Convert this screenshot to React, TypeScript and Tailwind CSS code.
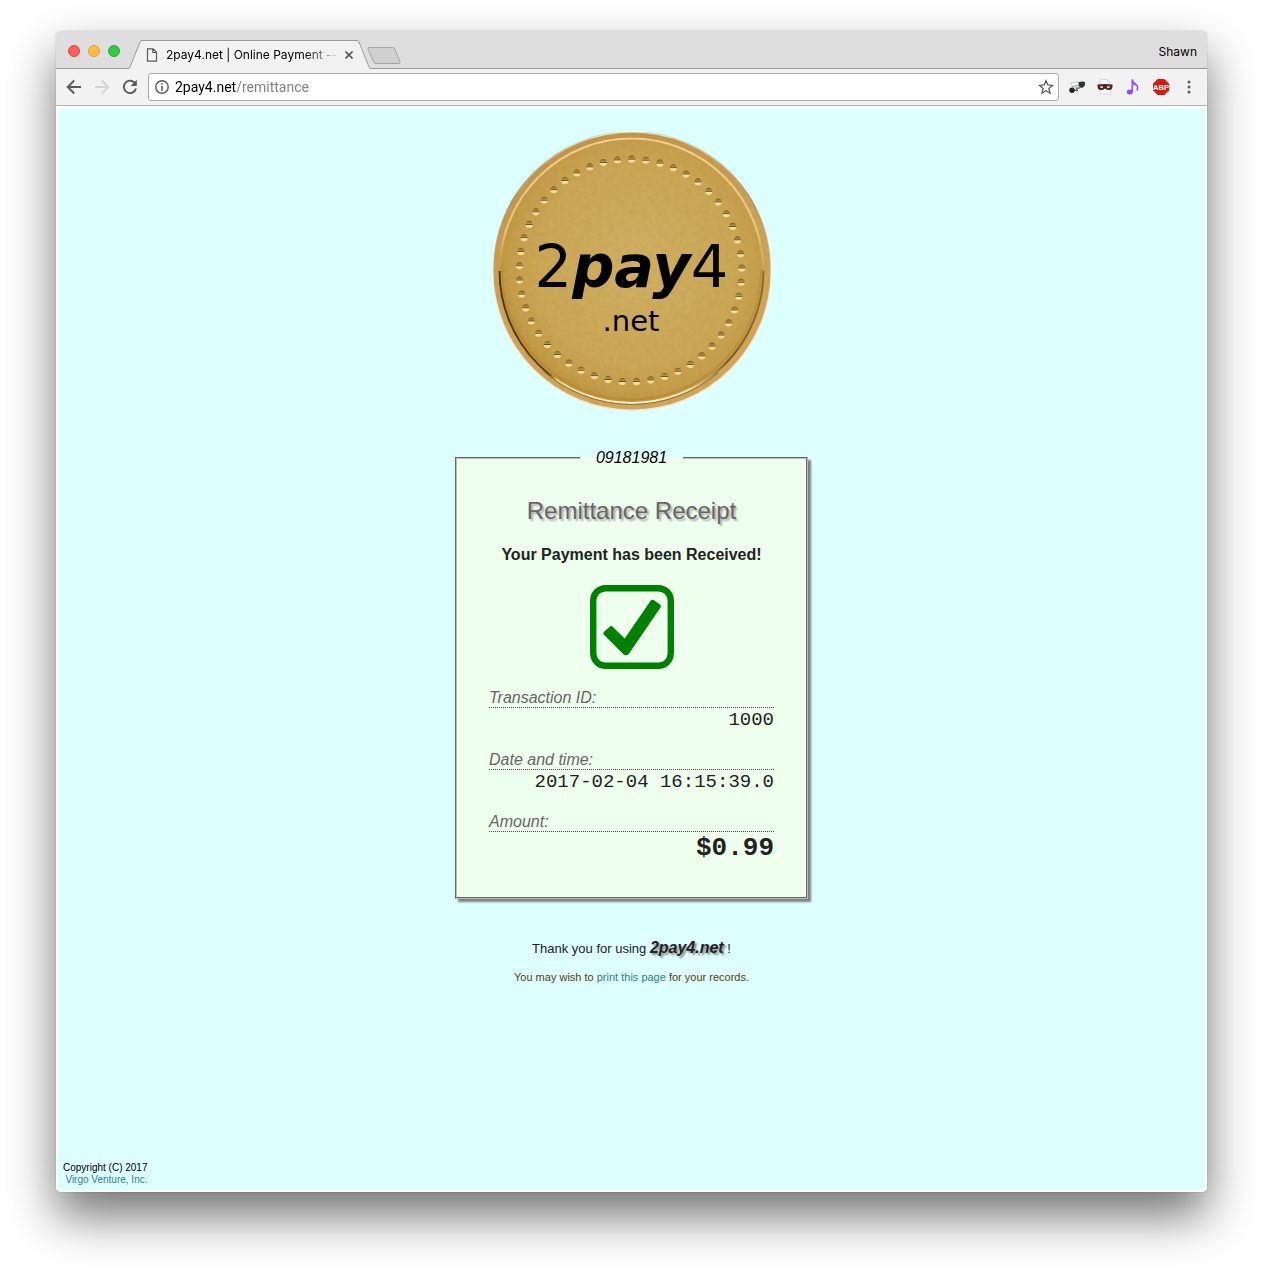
import React from "react";

const DOT_COUNT = 49;
const dots = Array.from({ length: DOT_COUNT }, (_, i) => {
  const angle = (i / DOT_COUNT) * Math.PI * 2 + 0.01;
  return { x: 138.5 + 111.3 * Math.sin(angle), y: 138.5 - 111.3 * Math.cos(angle) };
});

function CoinLogo() {
  return (
    <svg viewBox="0 0 280 280" className="block size-[280px]" role="img" aria-label="2pay4.net">
      <defs>
        <radialGradient id="face" cx="0.52" cy="0.48" r="0.55">
          <stop offset="0" stopColor="#d0af64" />
          <stop offset="0.65" stopColor="#cba858" />
          <stop offset="0.88" stopColor="#c59d4b" />
          <stop offset="1" stopColor="#ba8d36" />
        </radialGradient>
        <linearGradient id="rim" x1="0" y1="0" x2="0.3" y2="1">
          <stop offset="0" stopColor="#c0934a" />
          <stop offset="0.25" stopColor="#c4994e" />
          <stop offset="0.6" stopColor="#cba45c" />
          <stop offset="1" stopColor="#cfa65f" />
        </linearGradient>
        <linearGradient id="lowerEdge" x1="0" y1="0" x2="1" y2="0">
          <stop offset="0" stopColor="#4a3206" />
          <stop offset="0.19" stopColor="#5b3f0b" />
          <stop offset="0.22" stopColor="#f6dfa0" />
          <stop offset="0.5" stopColor="#fffbe6" />
          <stop offset="0.72" stopColor="#f9e6ad" />
          <stop offset="0.86" stopColor="#7b5815" />
          <stop offset="1" stopColor="#8d6824" />
        </linearGradient>
        <linearGradient id="upperEdge" x1="0" y1="0" x2="0" y2="1">
          <stop offset="0" stopColor="#f7d697" stopOpacity="0.95" />
          <stop offset="0.7" stopColor="#f4cd85" stopOpacity="0.8" />
          <stop offset="1" stopColor="#f4cd85" stopOpacity="0" />
        </linearGradient>
        <linearGradient id="outline" x1="0" y1="0" x2="0" y2="1">
          <stop offset="0" stopColor="#8f7440" stopOpacity="0.2" />
          <stop offset="0.5" stopColor="#8f7440" stopOpacity="0.8" />
          <stop offset="1" stopColor="#8f7440" stopOpacity="0" />
        </linearGradient>
        <linearGradient id="dot" x1="0" y1="0" x2="0" y2="1">
          <stop offset="0" stopColor="#7a591c" />
          <stop offset="0.2" stopColor="#9a7835" />
          <stop offset="0.38" stopColor="#b5944c" />
          <stop offset="0.5" stopColor="#6a4b14" />
          <stop offset="0.62" stopColor="#fbe3a6" />
          <stop offset="1" stopColor="#f0d08a" />
        </linearGradient>
        <filter id="grain" x="0" y="0" width="1" height="1">
          <feTurbulence type="fractalNoise" baseFrequency="0.18" numOctaves="3" seed="4" result="n" />
          <feColorMatrix in="n" type="matrix" values="0 0 0 0 0.38  0 0 0 0 0.24  0 0 0 0 0.03  0.9 0 0 0 -0.34" result="g" />
          <feComposite in="g" in2="SourceGraphic" operator="in" />
        </filter>
      </defs>
      <circle cx="140" cy="139.500" r="139.500" fill="#f6e6cd" />
      <circle cx="140" cy="139" r="138.500" fill="url(#rim)" />
      <path d="M1.500 138A138.500 138.500 0 0 1 278.500 138" fill="none" stroke="url(#outline)" strokeWidth="1.200" />
      <circle cx="139.500" cy="138.500" r="132" fill="url(#face)" />
      <path d="M8 138A131.500 131.500 0 0 1 271 138" fill="none" stroke="url(#upperEdge)" strokeWidth="2.200" />
      <path d="M10 138A129.500 129.500 0 0 0 269 138" fill="none" stroke="#a27627" strokeWidth="2" opacity="0.3" />
      <path d="M7.500 139A132 132 0 0 0 271.500 139" fill="none" stroke="url(#lowerEdge)" strokeWidth="1.900" />
      <path d="M50 238A134 134 0 0 0 226 241" fill="none" stroke="#7c5715" strokeWidth="1" opacity="0.7" />
      <circle cx="140" cy="139" r="138" fill="#000" filter="url(#grain)" opacity="0.35" />
      {dots.map((d, i) => (
        <circle key={i} cx={d.x} cy={d.y} r="3.600" fill="url(#dot)" />
      ))}
      <g fontFamily="DejaVu Sans, sans-serif" fill="#000" textAnchor="middle">
        <text x="139.500" y="155" fontSize="59">
          2<tspan fontWeight="bold" fontStyle="italic">pay</tspan>4
        </text>
        <text x="139" y="199" fontSize="29">.net</text>
      </g>
    </svg>
  );
}

function CheckMark() {
  return (
    <svg viewBox="0 0 84 84" className="mt-[18px] block size-[84px]" role="img" aria-label="Received">
      <rect x="3.200" y="3.200" width="77.600" height="77.600" rx="12.500" fill="none" stroke="#008000" strokeWidth="6.400" />
      <path
        d="M14.300 46.500L20.300 41.200Q21.300 40.400 22.300 41.400L34.700 53.600L60.800 15.600Q62 14.200 63.600 15.100L70 19.600Q71.500 20.800 70.500 22.400L38.700 69Q36 71.400 33.200 69L14.200 50Q12.400 48.300 14.300 46.500Z"
        fill="#008000"
      />
    </svg>
  );
}

const toolButton = "flex size-5 shrink-0 items-center justify-center";

function TabStrip() {
  return (
    <div className="flex h-[38px] items-end border-b border-[#9b9b9b] bg-[#dedede] pl-3">
      <div className="flex gap-2 self-center pt-0.5">
        <button aria-label="Close window" className="size-3 rounded-full border border-[#e2463f] bg-[#fc605b]" />
        <button aria-label="Minimize window" className="size-3 rounded-full border border-[#dfa133] bg-[#fdbc40]" />
        <button aria-label="Zoom window" className="size-3 rounded-full border border-[#27aa35] bg-[#34c84a]" />
      </div>
      <div className="-mb-px ml-2 flex h-[29px]">
        <svg viewBox="0 0 14 29" className="h-[29px] w-3.5">
          <path d="M0 29L0 28.500Q1.500 28.500 2 27L12 2Q12.500.5 14 .5V29Z" fill="#f2f2f2" />
          <path d="M0 28.500Q1.500 28.500 2 27L12 2Q12.500.5 14 .5" fill="none" stroke="#9b9b9b" />
        </svg>
        <div className="flex w-[215px] items-center border-t border-[#9b9b9b] bg-[#f2f2f2] pl-1">
          <svg viewBox="0 0 12 14" className="h-3.5 w-3 shrink-0" fill="none" stroke="#5a5a5a" strokeWidth="1.200">
            <path d="M1.500.8H7L10.500 4.300V13.200H1.500ZM6.800.8V4.500H10.500" />
          </svg>
          <span className="ml-2 w-[173px] overflow-hidden bg-gradient-to-r from-black from-80% to-transparent bg-clip-text font-[Inter,sans-serif] text-xs whitespace-nowrap text-transparent">
            2pay4.net | Online Payment --
          </span>
          <button aria-label="Close tab" className="ml-1 flex size-3 items-center justify-center">
            <svg viewBox="0 0 8 8" className="size-2" stroke="#555" strokeWidth="1.600">
              <path d="M.5.5L7.500 7.500M7.500.5L.5 7.500" />
            </svg>
          </button>
        </div>
        <svg viewBox="0 0 14 29" className="h-[29px] w-3.5">
          <path d="M14 29L14 28.500Q12.500 28.500 12 27L2 2Q1.500.5 0 .5V29Z" fill="#f2f2f2" />
          <path d="M14 28.500Q12.500 28.500 12 27L2 2Q1.500.5 0 .5" fill="none" stroke="#9b9b9b" />
        </svg>
      </div>
      <button aria-label="New tab" className="-ml-1 mb-1">
        <svg viewBox="0 0 34 17" className="block h-[17px] w-[34px]">
          <path d="M2 .5H25.500Q27 .5 27.700 2L33 14.500Q33.500 16.500 32 16.500H9Q7.500 16.500 6.800 15L1 2Q.5.5 2 .5Z" fill="#cfcfcf" stroke="#a5a5a5" />
        </svg>
      </button>
      <span className="mr-2.5 ml-auto self-center pt-1 font-[Inter,sans-serif] text-xs text-black">Shawn</span>
    </div>
  );
}

function Toolbar() {
  return (
    <div className="flex h-[37px] items-center border-b border-[#b4b4b4] bg-[#f2f2f2] pr-2 pl-2">
      <button aria-label="Back" className={toolButton}>
        <svg viewBox="0 0 16 16" className="size-4" fill="none" stroke="#5a5a5a" strokeWidth="1.900">
          <path d="M15 8H2M8.200 1.500L1.700 8L8.200 14.500" />
        </svg>
      </button>
      <button aria-label="Forward" disabled className={`${toolButton} ml-2`}>
        <svg viewBox="0 0 16 16" className="size-4" fill="none" stroke="#d4d4d4" strokeWidth="1.900">
          <path d="M1 8H14M7.800 1.500L14.300 8L7.800 14.500" />
        </svg>
      </button>
      <button aria-label="Reload" className={`${toolButton} ml-2`}>
        <svg viewBox="0 0 16 16" className="size-4">
          <path d="M13.300 4.600A6.200 6.200 0 1 0 14 9.500" fill="none" stroke="#5a5a5a" strokeWidth="1.900" />
          <path d="M14.800.8V7H8.600Z" fill="#5a5a5a" />
        </svg>
      </button>
      <div className="ml-2 flex h-7 min-w-0 flex-1 items-center rounded-[3px] border border-[#adadad] bg-white pr-1 pl-1.5">
        <svg viewBox="0 0 14 14" className="size-3.5 shrink-0">
          <circle cx="7" cy="7" r="6.200" fill="none" stroke="#5a5a5a" strokeWidth="1.400" />
          <path d="M6.200 3.200H7.800V4.800H6.200ZM6.200 6H7.800V10.800H6.200Z" fill="#5a5a5a" />
        </svg>
        <input
          aria-label="Address"
          defaultValue="2pay4.net/remittance"
          className="ml-1.5 min-w-0 flex-1 bg-[linear-gradient(to_right,#000_61px,#808080_61px)] bg-clip-text font-[Roboto,sans-serif] text-sm text-transparent outline-none"
        />
        <button aria-label="Bookmark this page" className="flex size-4 items-center justify-center">
          <svg viewBox="0 0 16 16" className="size-4" fill="none" stroke="#5a5a5a" strokeWidth="1.300">
            <path d="M8 1.700L9.800 6L14.500 6.400L10.900 9.500L12 14.200L8 11.700L4 14.200L5.100 9.500L1.500 6.400L6.200 6Z" />
          </svg>
        </button>
      </div>
      <div className="ml-2 flex gap-2">
        <button aria-label="Camera extension" className={toolButton}>
          <svg viewBox="0 0 18 18" className="size-[18px]">
            <path d="M2.500 5L11 3.500L13 8L5 9.500Z" fill="#f6f6f6" stroke="#c4c4c4" strokeWidth=".8" />
            <path d="M4 8.500L12 7" stroke="#a5a5a5" />
            <path d="M10.500 4.200Q15 2.800 17 4.300Q17.500 8.300 14.500 9.800Q10.500 10.500 10.500 4.200Z" fill="#2f3430" />
            <path d="M8 10L13 9L11 11Z" fill="#59605b" />
            <path d="M8.700 9.500V13.500M5 12.200H10" stroke="#6a706c" strokeWidth="1.600" />
            <circle cx="4" cy="12.300" r="2.700" fill="#1f2421" />
          </svg>
        </button>
        <button aria-label="Mask extension" className={toolButton}>
          <svg viewBox="0 0 18 18" className="size-[18px]">
            <path d="M4 1.500H11L15 5V16H4Z" fill="#fafafa" stroke="#d2d2d2" strokeWidth=".8" />
            <path d="M11 1.500V5H15" fill="#e3e3e3" />
            <path d="M1.500 6.500Q9 5.500 16.500 6.500Q17 12 13 12Q10.500 12 9 10.500Q7.500 12 5 12Q1 12 1.500 6.500Z" fill="#4f2525" />
            <path d="M4 8.300H7V10H4.500ZM11 8.300H14L13.500 10H11Z" fill="#d8d0d0" />
          </svg>
        </button>
        <button aria-label="Music extension" className={toolButton}>
          <svg viewBox="0 0 18 18" className="size-[18px]">
            <ellipse cx="5.800" cy="14" rx="3" ry="2.400" fill="#9747ff" />
            <path d="M8.200 14V1.500Q9 4.500 11.500 6Q15 8.500 12.800 12.500" fill="none" stroke="#9747ff" strokeWidth="1.500" />
            <path d="M8.500 4Q9.500 6 12.500 7.500Q10.500 7.500 8.500 6.500Z" fill="#9747ff" />
          </svg>
        </button>
        <button aria-label="Adblock Plus" className={toolButton}>
          <svg viewBox="0 0 18 18" className="size-[18px]">
            <path d="M5.700 1H12.300L17 5.700V12.300L12.300 17H5.700L1 12.300V5.700Z" fill="#d6180e" />
            <text x="9" y="11.800" textAnchor="middle" fontFamily="Liberation Sans, sans-serif" fontSize="7.500" fontWeight="700" fill="#fff">
              ABP
            </text>
          </svg>
        </button>
        <button aria-label="Menu" className={toolButton}>
          <svg viewBox="0 0 4 14" className="h-3.5 w-1" fill="#5a5a5a">
            <circle cx="2" cy="2" r="1.500" />
            <circle cx="2" cy="7" r="1.500" />
            <circle cx="2" cy="12" r="1.500" />
          </svg>
        </button>
      </div>
    </div>
  );
}

const label = "h-[21px] border-b border-dotted border-[#555] text-base leading-[22px] text-[#666] italic";
const value = "text-right font-['Liberation_Mono',monospace] text-[19px] leading-6 text-[#222]";

function Receipt() {
  return (
    <fieldset className="mt-[34px] w-full max-w-[353px] border-2 border-[#bbb] bg-[#eeffee] px-8 pb-[33px] shadow-[3px_3px_2px_#808080] [border-style:groove]">
      <legend className="mx-auto px-4 text-base leading-6 text-black italic">09181981</legend>
      <div className="flex flex-col items-center">
        <h1 className="mt-[25px] text-2xl leading-8 text-[#666] [text-shadow:2px_2px_2px_#aaa]">Remittance Receipt</h1>
        <p className="mt-4 text-base leading-6 font-bold whitespace-nowrap text-[#222]">Your Payment has been Received!</p>
        <CheckMark />
      </div>
      <dl className="mt-[18px] flex flex-col gap-[17px]">
        <div>
          <dt className={label}>Transaction ID:</dt>
          <dd className={value}>1000</dd>
        </div>
        <div>
          <dt className={label}>Date and time:</dt>
          <dd className={value}>2017-02-04 16:15:39.0</dd>
        </div>
        <div>
          <dt className={label}>Amount:</dt>
          <dd className="text-right font-['Liberation_Mono',monospace] text-[26px] leading-8 font-bold text-[#222]">$0.99</dd>
        </div>
      </dl>
    </fieldset>
  );
}

export default function App() {
  return (
    <div className="flex min-h-screen flex-col bg-white px-14 pt-[31px] pb-20 font-['Liberation_Sans',Arial,sans-serif]">
      <div className="flex flex-1 flex-col overflow-hidden rounded-[5px] bg-white shadow-[0_0_1px_rgba(0,0,0,0.5),0_24px_48px_rgba(0,0,0,0.55)]">
        <TabStrip />
        <Toolbar />
        <div className="flex flex-1 flex-col border-2 border-white bg-[#ddffff]">
          <main className="flex flex-col items-center pt-6">
            <CoinLogo />
            <Receipt />
            <p className="mt-[37px] text-[13px] leading-6 text-[#222]">
              Thank you for using{" "}
              <strong className="text-base leading-6 italic [text-shadow:2px_2px_2px_#888]">2pay4.net</strong> !
            </p>
            <p className="mt-2 text-[11px] leading-4 text-[#554400]">
              You may wish to{" "}
              <a href="#print" className="text-[#2f8090]">
                print this page
              </a>{" "}
              for your records.
            </p>
          </main>
          <footer className="mt-auto self-start pb-1 pl-[5px] text-right text-[10px] leading-3 text-black">
            <p>Copyright (C) 2017</p>
            <a href="#virgo" className="block text-[#2f8090]">
              Virgo Venture, Inc.
            </a>
          </footer>
        </div>
      </div>
    </div>
  );
}
